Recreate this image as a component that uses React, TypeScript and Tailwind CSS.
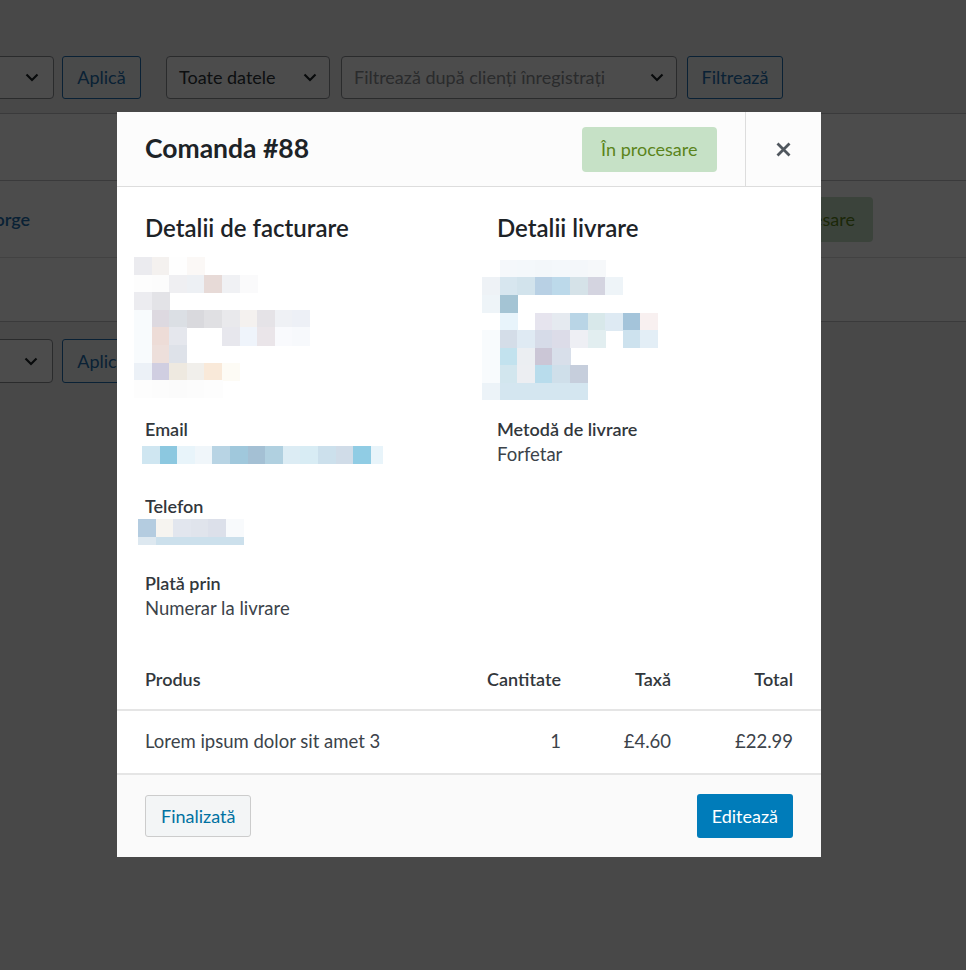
import React from "react";

const W = "#ffffff";

const billing: string[][] = [
  ["#ebebef", "#f4f1ef", "#fefefe", "#fbf8f6", W, W, W, W, W, W],
  ["#fdfdfd", "#fcfcfc", "#efeff2", "#edf0f4", "#e7dad7", "#f0f1f4", "#fafafb", W, W, W],
  ["#ececf0", "#e3e3e7", W, W, W, W, W, W, W, W],
  ["#f8fbfd", "#ddd9e0", "#dbdfe4", "#d9d9dd", "#e0e0e3", "#e9e9ec", "#f4f1ef", "#e5e3e7", "#eff1f5", "#edf0f6"],
  ["#f8fbfd", "#eddcd7", "#e5e7ed", W, W, "#e7e7ed", "#eff4fb", "#eae5e9", "#f9fafd", "#f7f9fc"],
  ["#f8fbfd", "#eddfdb", "#dee2e9", W, W, W, W, W, W, W],
  ["#ecf1f7", "#d0cee1", "#eee9e0", "#f1efeb", "#f9e9d9", "#fdfbf5", W, W, W, W],
  ["#fdfdfd", "#fcfcfc", "#fbfbfb", "#fcfcfc", "#fdfdfd", W, W, W, W, W],
];

const shipping: string[][] = [
  [W, "#f5f8fb", "#f4f8fb", "#f3f7fa", "#f4f8fb", "#f4f7fa", "#f6f8fa", W, W, W],
  ["#eef2f6", "#d7e6ef", "#d2e3ec", "#b8d0e4", "#bcd9ea", "#d5e2e8", "#d4d4e0", "#eef4f8", W, W],
  ["#eef4f8", "#a4c4d4", W, W, W, W, W, W, W, W],
  [W, "#e8f4fb", W, "#e6e4ee", "#e5eaf0", "#b9d5e6", "#d8e8ea", "#deeaf3", "#a4c4da", "#f8f0f0"],
  ["#f8fbfd", "#d4dde8", "#dfeaf3", "#d6dbe8", "#dcdce8", "#eeeff4", "#e2eef0", W, "#cde2ee", "#e3eef6"],
  ["#f8fbfd", "#c2e2ee", "#ebeef2", "#cbc6d6", "#d8dfea", W, W, W, W, W],
  ["#f8fbfd", "#d2e6ee", "#eceef2", "#b8dcec", "#cfdfea", "#c6cedc", W, W, W, W],
  ["#ecf3f8", "#d4e6f0", "#d4e6f0", "#d4e6f0", "#d4e6f0", "#d4e6f0", W, W, W, W],
];

const email = [
  "#cfe6f1", "#8cc8e0", "#e8f4fa", "#f0f6fa", "#b8d4e4", "#a0c8dc", "#a4c0d4",
  "#b0d0e0", "#dcecf4", "#d8ecf4", "#cce0ec", "#d0dce8", "#90cce4", "#e8f4fa",
];

const phoneTop = ["#b4cce0", "#f6f4f0", "#e2e6ee", "#e0e4ec", "#dce0ea", "#f8fafc"];
const phoneBottom = ["#dde8f0", "#cce0ec", "#cce0ec", "#cce0ec", "#cce0ec", "#cce0ec"];

const C = 17.6;

function Blob({ rows, oy, w, h }: { rows: string[][]; oy: number; w: number; h: number }) {
  return (
    <svg width={w} height={h} viewBox={`0 0 ${w} ${h}`} className="block" shapeRendering="crispEdges">
      {rows.map((r, i) =>
        r.map((c, j) =>
          c === W ? null : (
            <rect key={`${i}-${j}`} x={j * C} y={oy + i * C} width={C + 0.5} height={C + 0.5} fill={c} />
          )
        )
      )}
    </svg>
  );
}

function Chevron() {
  return (
    <svg width="14" height="9" viewBox="0 0 14 9" className="block">
      <path d="M1.5 1.5 L7 7 L12.5 1.5" fill="none" stroke="#1d2327" strokeWidth="2.2" />
    </svg>
  );
}

export default function App() {
  return (
    <div className="relative h-[970px] w-[966px] overflow-hidden bg-[#f0f0f1] font-['Lato',sans-serif]">
      {/* Background admin page */}
      <div className="pt-[56px]">
        <div className="-ml-[100px] flex h-[43px] items-stretch">
          <div className="flex w-[154px] items-center justify-end rounded-[4px] border border-[#8c8f94] bg-white pr-[14px]">
            <Chevron />
          </div>
          <div className="ml-[8px] flex w-[79px] items-center justify-center rounded-[3px] border border-[#2271b1] bg-[#f6f7f7] text-[18px] text-[#2271b1]">
            Aplică
          </div>
          <div className="ml-[25px] flex w-[164px] items-center justify-between rounded-[4px] border border-[#8c8f94] bg-white pl-[12px] pr-[12px] text-[18px] text-[#2c3338]">
            <span>Toate datele</span>
            <Chevron />
          </div>
          <div className="ml-[11px] flex w-[336px] items-center justify-between rounded-[4px] border border-[#8c8f94] bg-white pl-[12px] pr-[12px] text-[18px] text-[#8c8f94]">
            <span>Filtrează după clienți înregistrați</span>
            <Chevron />
          </div>
          <div className="ml-[10px] flex w-[96px] items-center justify-center rounded-[3px] border border-[#2271b1] bg-[#f6f7f7] text-[18px] text-[#2271b1]">
            Filtrează
          </div>
        </div>

        <div className="mt-[14px] border-y border-[#c3c4c7] bg-white">
          <div className="h-[67px] border-b border-[#c3c4c7]" />
          <div className="flex h-[77px] items-center border-b border-[#dcdcde]">
            <div className="flex w-[30px] justify-end whitespace-nowrap text-[18px] font-semibold text-[#2271b1]">
              #88 Popescu George
            </div>
            <div className="ml-auto mr-[93px] flex h-[45px] items-center rounded-[4px] bg-[#c6e1c6] px-[18px] text-[18px] text-[#5b841b]">
              În procesare
            </div>
          </div>
          <div className="h-[63px]" />
        </div>

        <div className="mt-[17px] -ml-[100px] flex h-[44px] items-stretch">
          <div className="flex w-[153px] items-center justify-end rounded-[4px] border border-[#8c8f94] bg-white pr-[14px]">
            <Chevron />
          </div>
          <div className="ml-[9px] flex w-[79px] items-center justify-center rounded-[3px] border border-[#2271b1] bg-[#f6f7f7] text-[18px] text-[#2271b1]">
            Aplică
          </div>
        </div>
      </div>

      {/* Backdrop */}
      <div className="absolute inset-0 bg-black/70" />

      {/* Modal */}
      <div className="absolute left-[117px] top-[112px] w-[704px] bg-white">
        <div className="flex h-[75px] items-stretch border-b border-[#dddddd] bg-[#fcfcfc]">
          <div className="flex flex-1 items-center pl-[28px] text-[26.5px] font-bold text-[#1d2327]">Comanda #88</div>
          <div className="flex items-center pr-[28px]">
            <div className="flex h-[45px] items-center rounded-[4px] bg-[#c6e1c6] px-[19.5px] text-[18px] text-[#5b841b]">
              În procesare
            </div>
          </div>
          <div className="flex w-[76px] items-center justify-center border-l border-[#dddddd]">
            <svg width="15" height="15" viewBox="0 0 15 15">
              <path d="M1.5 1.5 L13.5 13.5 M13.5 1.5 L1.5 13.5" stroke="#50575e" strokeWidth="2.8" fill="none" />
            </svg>
          </div>
        </div>

        <div className="grid grid-cols-2 pt-[26px] text-[18px] text-[#3c434a]">
          <div className="px-[28px]">
            <h2 className="text-[24px] font-semibold leading-[30px] text-[#1d2327]">Detalii de facturare</h2>
            <div className="-ml-[11px] mt-[14px]">
              <Blob rows={billing} oy={0} w={176} h={143} />
            </div>
            <div className="mt-[17px] font-semibold leading-[24px] text-[#32373c]">Email</div>
            <div className="-ml-[3px] mt-[5px] flex h-[18px]">
              {email.map((c, i) => (
                <div key={i} className="h-full" style={{ width: i === email.length - 1 ? 12 : C, background: c }} />
              ))}
            </div>
            <div className="mt-[30px] font-semibold leading-[24px] text-[#32373c]">Telefon</div>
            <div className="-ml-[7px] mt-[1px]">
              <div className="flex h-[18px]">
                {phoneTop.map((c, i) => (
                  <div key={i} className="h-full" style={{ width: C, background: c }} />
                ))}
              </div>
              <div className="flex h-[8px]">
                {phoneBottom.map((c, i) => (
                  <div key={i} className="h-full" style={{ width: C, background: c }} />
                ))}
              </div>
            </div>
            <div className="mt-[26px] font-semibold leading-[24px] text-[#32373c]">Plată prin</div>
            <div className="mt-[1px] text-[18.5px] leading-[24px]">Numerar la livrare</div>
          </div>
          <div className="px-[28px]">
            <h2 className="text-[24px] font-semibold leading-[30px] text-[#1d2327]">Detalii livrare</h2>
            <div className="-ml-[15px] mt-[14px]">
              <Blob rows={shipping} oy={2.7} w={176} h={143} />
            </div>
            <div className="mt-[17px] font-semibold leading-[24px] text-[#32373c]">Metodă de livrare</div>
            <div className="mt-[1px] text-[18.5px] leading-[24px]">Forfetar</div>
          </div>
        </div>

        <div className="mt-[29px] text-[18px]">
          <div className="grid h-[62px] grid-cols-[1fr_114px_110px_122px] items-center border-b-2 border-[#e5e5e5] px-[28px] font-semibold text-[#32373c]">
            <div>Produs</div>
            <div className="text-right">Cantitate</div>
            <div className="text-right">Taxă</div>
            <div className="text-right">Total</div>
          </div>
          <div className="grid h-[64px] grid-cols-[1fr_114px_110px_122px] items-center border-b-2 border-[#e5e5e5] px-[28px] text-[18.5px] text-[#3c434a]">
            <div>Lorem ipsum dolor sit amet 3</div>
            <div className="text-right">1</div>
            <div className="text-right">£4.60</div>
            <div className="text-right">£22.99</div>
          </div>
        </div>

        <div className="flex h-[82px] items-center justify-between bg-[#fafafa] px-[28px] text-[18px]">
          <div className="flex h-[42px] items-center rounded-[3px] border border-[#cccccc] bg-[#f3f5f6] px-[15px] text-[#0071a1]">
            Finalizată
          </div>
          <div className="flex h-[44px] items-center rounded-[3px] bg-[#007cba] px-[15px] text-white">Editează</div>
        </div>
      </div>
    </div>
  );
}
